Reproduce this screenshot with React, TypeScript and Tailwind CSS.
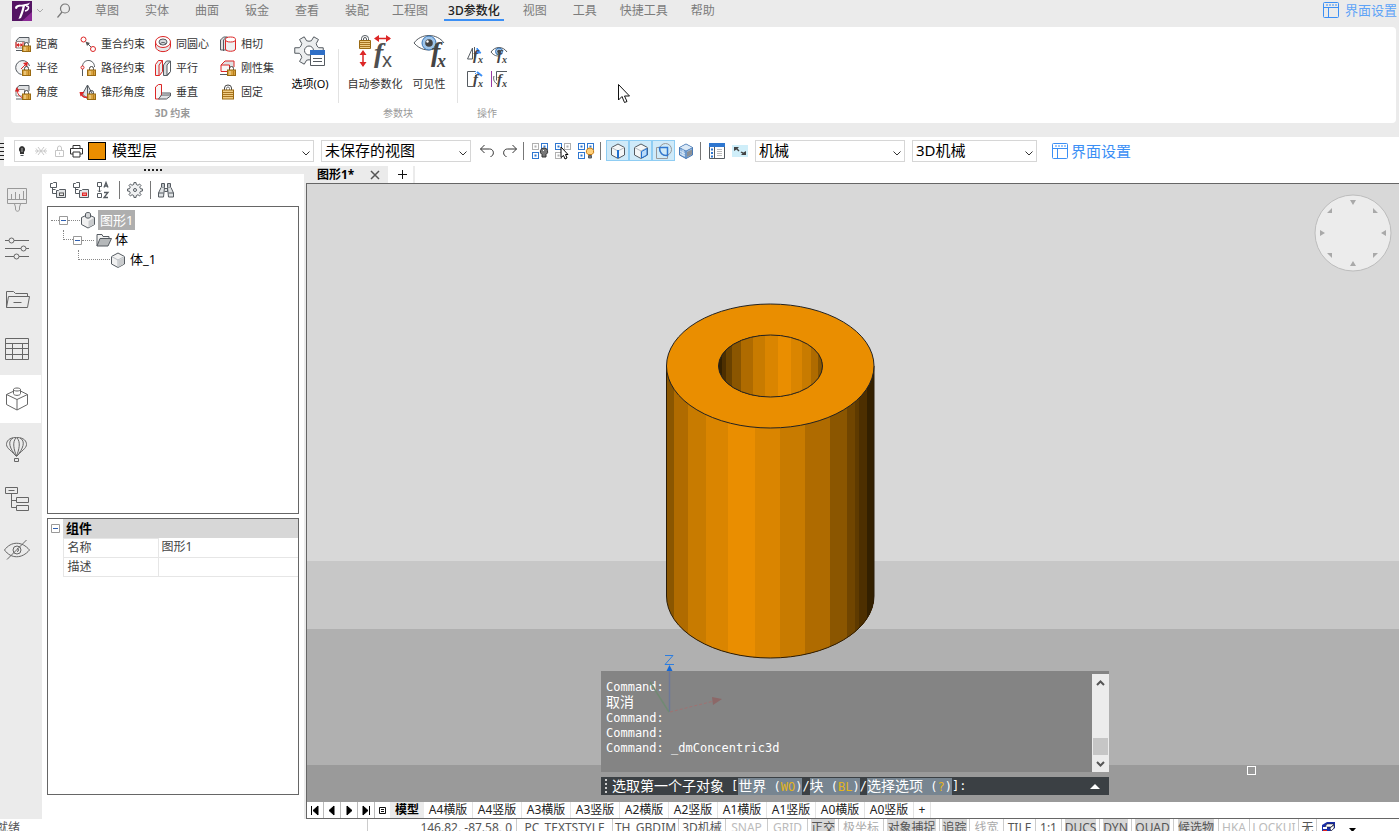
import React from "react";

type IconProps = { children: React.ReactNode; size?: string; box?: string };

function Icon({ children, size = "size-4", box = "0 0 16 16" }: IconProps) {
  return (
    <svg
      viewBox={box}
      className={`${size} shrink-0 overflow-visible`}
      fill="none"
      stroke="#555b61"
      strokeWidth="1"
      aria-hidden="true"
    >
      {children}
    </svg>
  );
}

// outline of a cog with n flat teeth between radii r and R
function gear(cx: number, cy: number, R: number, r: number, n: number) {
  const step = (Math.PI * 2) / n;
  const at = (radius: number, a: number) =>
    `${(cx + radius * Math.cos(a)).toFixed(2)} ${(cy + radius * Math.sin(a)).toFixed(2)}`;
  let d = "";
  for (let i = 0; i < n; i++) {
    const a = i * step;
    d += `${i ? "L" : "M"}${at(r, a - step * 0.27)}L${at(R, a - step * 0.18)}`;
    d += `L${at(R, a + step * 0.18)}L${at(r, a + step * 0.27)}`;
    d += `Q${at(r * 0.88, a + step * 0.5)} ${at(r, a + step * 0.73)}`;
  }
  return d + "z";
}

function Lock({ x, y }: { x: number; y: number }) {
  return (
    <g transform={`translate(${x} ${y})`}>
      <path d="M1.500 4V2.500a2 2 0 0 1 4 0V4" stroke="#444" />
      <rect x="-0.500" y="4" width="8" height="5.500" fill="#d9a441" stroke="#9a6a12" />
      <path d="M2 5v4" stroke="#f8e2ae" />
      <path d="M5.500 5v4" stroke="#b97e1c" />
    </g>
  );
}

const solid = (
  <>
    <path d="M1 5l3-3.500h10V7" fill="#dfe1e3" />
    <path d="M1 5.500h8.500V12H1z" fill="#fafafa" stroke="#888" />
  </>
);

const constraints = [
  {
    name: "距离",
    icon: (
      <>
        {solid}
        <path d="M1 6v6M8 6v6M2 9h5" stroke="#dc2626" />
        <path d="M1 9l3-2v4zM8 9L5.500 7v4z" fill="#dc2626" stroke="none" />
        <path d="M1 14.500h6" />
        <Lock x={8} y={6} />
      </>
    ),
  },
  {
    name: "重合约束",
    icon: (
      <>
        <circle cx="3.500" cy="3.500" r="2.500" stroke="#dc2626" />
        <circle cx="13" cy="13" r="2.500" stroke="#dc2626" />
        <path d="M7.500 7.500L11 11" />
        <path d="M5.500 5.500l4.500 1.500L7 10z" fill="#555" stroke="none" />
      </>
    ),
  },
  {
    name: "同圆心",
    icon: (
      <>
        <path d="M.5 6v4c0 7.500 15 7.500 15 0V6" fill="#e6e8ea" stroke="#dc2626" />
        <ellipse cx="8" cy="6" rx="7.500" ry="5.500" fill="#fff" stroke="#dc2626" />
        <ellipse cx="8" cy="6" rx="4" ry="3" fill="#d7dadd" />
        <path d="M5 8c1-2 5-2 6 0" />
      </>
    ),
  },
  {
    name: "相切",
    icon: (
      <>
        <path d="M.5 14V4l3-3h4v13z" fill="#dfe1e3" />
        <path d="M3.500 15V4l3-3" />
        <path d="M5.500 3.500V13c0 3 10 3 10 0V3.500" fill="#eef0f1" stroke="#dc2626" />
        <ellipse cx="10.500" cy="3.500" rx="5" ry="2.500" fill="#fff" stroke="#dc2626" />
      </>
    ),
  },
  {
    name: "半径",
    icon: (
      <>
        <path d="M14.500 6A7 7 0 1 0 6.500 14.500" fill="#f2f3f4" />
        <path d="M6 9l5-5" stroke="#dc2626" />
        <path d="M13 2l-1 5-4-4z" fill="#dc2626" stroke="none" />
        <Lock x={8} y={6} />
      </>
    ),
  },
  {
    name: "路径约束",
    icon: (
      <>
        <path d="M2.500 6c1-8 12-7 12 1" />
        <path d="M2.500 9v7" />
        <circle cx="2.500" cy="7.500" r="1.500" fill="#fff" stroke="#dc2626" />
        <Lock x={8} y={6} />
      </>
    ),
  },
  {
    name: "平行",
    icon: (
      <>
        <path d="M.5 4.500l3-4h4v11l-3 4h-4z" fill="#eceeef" stroke="#dc2626" />
        <path d="M4 15.500V5l3.500-4.500" stroke="#dc2626" />
        <path d="M8.500 15.500V5l3-4h4v10.500l-3 4z" fill="#d9dcde" />
        <path d="M12 15V5l3.500-4v10.500z" fill="#fff" />
      </>
    ),
  },
  {
    name: "刚性集",
    icon: (
      <>
        <path d="M1 5l4-4h9v6" fill="#dfe1e3" stroke="#dc2626" />
        <path d="M1 5h8.500v6.500H1z" fill="#f7f7f7" stroke="#dc2626" />
        <path d="M0 14.500h7" />
        <Lock x={8} y={6} />
      </>
    ),
  },
  {
    name: "角度",
    icon: (
      <>
        {solid}
        <path d="M2 5c0 5 3 8 6 9" stroke="#dc2626" />
        <path d="M2 3L0 7.500h4.500z" fill="#dc2626" stroke="none" />
        <path d="M1 15h6" />
        <Lock x={8} y={6} />
      </>
    ),
  },
  {
    name: "锥形角度",
    icon: (
      <>
        <path d="M7.500 1l5 9-5 5-5-5z" fill="#dfe2e4" />
        <path d="M7.500 1v14" />
        <path d="M1 9c1 4 4 5 7 4" stroke="#dc2626" strokeWidth="1.500" />
        <path d="M-.5 8H4.500L.5 12.500z" fill="#dc2626" stroke="none" />
        <Lock x={8} y={6} />
      </>
    ),
  },
  {
    name: "垂直",
    icon: (
      <>
        <path d="M.5 15V3l3-2.500h3V11l-2 4z" fill="#f7f7f7" stroke="#dc2626" />
        <path d="M6.500 9h9v3l-4 3H3.500l3-4h9" fill="#dfe2e4" />
      </>
    ),
  },
  {
    name: "固定",
    icon: (
      <>
        <path d="M4.500 6V4a3.500 3 0 0 1 7 0v2" stroke="#444" />
        <path d="M6.500 6V4.500a1.500 1.500 0 0 1 3 0V6" stroke="#777" />
        <rect x="2.500" y="6" width="11" height="9" fill="#f0cd84" stroke="#9a6a12" />
        <path d="M3 8.500h10M3 10.500h10M3 12.500h10" stroke="#a87420" />
      </>
    ),
  },
];

const menus = [
  "草图",
  "实体",
  "曲面",
  "钣金",
  "查看",
  "装配",
  "工程图",
  "3D参数化",
  "视图",
  "工具",
  "快捷工具",
  "帮助",
];

function LayoutIcon() {
  return (
    <Icon>
      <g stroke="#3b8ff5">
        <rect x="0.500" y="0.500" width="15" height="15" rx="1" />
        <path d="M0.500 5.500h15M5.500 5.500v10" />
        <path d="M3 3h11" strokeDasharray="2 1" />
      </g>
    </Icon>
  );
}

function MenuBar() {
  return (
    <nav className="flex h-[27px] shrink-0 items-start pl-3 pr-0.5 text-[#7c7c7c]">
      <svg viewBox="0 0 20 20" className="mt-px size-5" aria-label="logo">
        <rect width="20" height="20" fill="#541463" />
        <path d="M10 20l10-9v9z" fill="#8b2a96" />
        <path
          d="M3 7.500C3 3 8 4 11 3.500s5-1 7-2L16.500 4c-2 1-3 .8-3.500 1-1 4-2 8-4 12l-2.500 1C8 14 10 9 10.500 5.500 7 5.500 5 6 5 8z"
          fill="#fff"
        />
        <path d="M14 5c4 0 3 4-1 5" fill="none" stroke="#fff" strokeWidth="1.500" />
      </svg>
      <svg viewBox="0 0 8 5" className="ml-1 mt-2 h-[5px] w-2" fill="none" stroke="#aaa">
        <path d="M1 1l3 3 3-3" />
      </svg>
      <button aria-label="搜索" className="ml-3 mt-[3px]">
        <svg viewBox="0 0 16 16" className="size-4" fill="none" stroke="#777" strokeWidth="1.200">
          <circle cx="9" cy="5.500" r="4.500" />
          <path d="M6 9l-4.500 5.500" />
        </svg>
      </button>
      <div className="ml-2.5 flex">
        {menus.map((m) => (
          <button
            key={m}
            className={`relative h-[21px] min-w-[50px] px-[10px] text-xs leading-[21px] ${
              m === "3D参数化" ? "font-medium text-[#222]" : ""
            }`}
          >
            {m}
            {m === "3D参数化" && (
              <span className="absolute inset-x-1.5 bottom-0 h-0.5 bg-[#3b8ff5]" />
            )}
          </button>
        ))}
      </div>
      <button className="ml-auto mt-0.5 flex items-center gap-1.5 text-[13px] leading-4 text-[#5ea3f7]">
        <LayoutIcon />
        界面设置
      </button>
    </nav>
  );
}

function Fx({ small }: { small?: boolean }) {
  return (
    <g
      fill="#444"
      stroke="none"
      fontFamily="Liberation Serif, serif"
      fontStyle="italic"
      fontWeight="bold"
    >
      <text x={small ? 6 : 18} y={small ? 13 : 26} fontSize={small ? 15 : 28}>
        f
      </text>
      <text x={small ? 11 : 24} y={small ? 16 : 32} fontSize={small ? 10 : 18}>
        x
      </text>
    </g>
  );
}

function Ribbon() {
  return (
    <section className="ml-[11px] mr-[3px] flex h-24 shrink-0 rounded bg-white text-[11px] text-[#333]">
      <div className="flex w-[327px] flex-col">
        <div className="flex flex-1 items-start">
          <div className="grid grid-cols-[65px_75px_65px_70px] pl-1 pt-[5px]">
            {constraints.map((c) => (
              <button key={c.name} className="flex h-6 items-center gap-[5px] whitespace-nowrap">
                <Icon>{c.icon}</Icon>
                {c.name}
              </button>
            ))}
          </div>
          <button className="flex w-10 flex-col items-center gap-[9px] whitespace-nowrap pt-2 text-black">
            <Icon size="size-8" box="0 0 32 32">
              <path d={gear(15, 15.5, 14.5, 10, 6)} fill="#eceeef" />
              <circle cx="15" cy="15.500" r="4.500" fill="#fff" />
              <path d="M16.500 16.500h14v14h-14z" fill="#fff" />
              <path d="M16 15h15v5H16z" fill="#2f6fc6" stroke="none" />
              <path d="M19 23.500h9M19 26.500h9" />
            </Icon>
            <span>选项(O)</span>
          </button>
        </div>
        <div className="h-[18px] pr-1 text-center text-[10px] font-bold leading-4 text-[#999]">3D 约束</div>
      </div>
      <div className="mt-[22px] h-[54px] w-px bg-[#e2e2e2]" />
      <div className="flex w-[118px] flex-col">
        <div className="flex flex-1 items-start gap-2 pl-2">
          <button className="flex w-14 flex-col items-center gap-[9px] whitespace-nowrap pt-2">
            <Icon size="size-8" box="0 0 32 32">
              <path d="M2.500 5V3.500a3.500 3 0 0 1 7 0V5M4.500 5V4a1.500 1.500 0 0 1 3 0v1" />
              <path d="M.5 5.500h11v8H.5z" fill="#f0cd84" stroke="#9a6a12" />
              <path d="M1 7.500h10M1 9.500h10M1 11.500h10" stroke="#a87420" />
              <path d="M17 3.500h14M4 17v14" stroke="#dc2626" strokeWidth="1.500" />
              <path
                d="M15 3.500l5-3.500v7zM32 3.500L27 0v7zM4 15L.5 20h7zM4 32l-3.500-5h7z"
                fill="#dc2626"
                stroke="none"
              />
              <g fill="#505050" stroke="none">
                <text x="15" y="27" fontSize="28" fontStyle="italic" fontWeight="bold" fontFamily="Liberation Serif, serif">
                  f
                </text>
                <text x="23" y="32" fontSize="20" fontFamily="Liberation Sans, sans-serif">
                  x
                </text>
              </g>
            </Icon>
            <span>自动参数化</span>
          </button>
          <button className="flex w-9 flex-col items-center gap-[9px] whitespace-nowrap pt-2">
            <Icon size="size-8" box="0 0 32 32">
              <path d="M1 8C8-2 24-2 31 8M1 8c6 7 14 8 19 6" />
              <circle cx="16" cy="8" r="7" fill="#9fc5ea" stroke="#3a76b8" />
              <circle cx="16" cy="8" r="3.800" fill="#444" stroke="none" />
              <circle cx="14.500" cy="6.500" r="1.200" fill="#fff" stroke="none" />
              <Fx />
            </Icon>
            <span>可见性</span>
          </button>
        </div>
        <div className="h-[18px] text-center text-[10px] leading-4 text-[#999]">参数块</div>
      </div>
      <div className="mt-[22px] h-[54px] w-px bg-[#e2e2e2]" />
      <div className="flex w-[58px] flex-col">
        <div className="grid flex-1 grid-cols-2 content-start gap-x-2 gap-y-2 pl-[9px] pr-[9px] pt-5">
          <button aria-label="镜像">
            <Icon>
              <path d="M5.500 1v11H.5zM7.500 0v13" />
              <path d="M10 1l4 5h-4z" fill="#3b8ff5" stroke="#3b8ff5" />
              <Fx small />
            </Icon>
          </button>
          <button aria-label="显示">
            <Icon>
              <path d="M0 5c4-6 12-6 16 0M0 5c3 4 6 4 8 4" />
              <circle cx="8" cy="4.500" r="3.500" fill="#9fc5ea" stroke="#3a76b8" />
              <circle cx="8" cy="4.500" r="1.800" fill="#444" stroke="none" />
              <Fx small />
            </Icon>
          </button>
          <button aria-label="拉伸">
            <Icon>
              <path d="M8 .5H.5v15H6" />
              <path d="M8.500 0v14" stroke="#3b8ff5" strokeDasharray="1 1" />
              <path d="M10 1l5 4" stroke="#3b8ff5" strokeWidth="2" />
              <Fx small />
            </Icon>
          </button>
          <button aria-label="翻转">
            <Icon>
              <path d="M.5 0v16" stroke="#9b3ba5" />
              <path d="M16 .5H5.500v9M3 5c-1 3 0 6 3 8" />
              <Fx small />
            </Icon>
          </button>
        </div>
        <div className="h-[18px] text-center text-[10px] leading-4 text-[#999]">操作</div>
      </div>
    </section>
  );
}

function Chevron() {
  return (
    <svg
      viewBox="0 0 8 5"
      className="pointer-events-none absolute right-[3px] top-2.5 h-[5px] w-2"
      fill="none"
      stroke="#333"
    >
      <path d="M.5 .5L4 4 7.500 .5" />
    </svg>
  );
}

function Combo({ label, value, width }: { label: string; value: string; width: string }) {
  return (
    <div className={`relative flex h-[22px] border border-[#d6d6d6] bg-white ${width}`}>
      <select
        aria-label={label}
        className="h-[18px] w-full appearance-none bg-transparent pl-[3px] text-[15px] leading-[18px] text-black outline-none"
      >
        <option>{value}</option>
      </select>
      <Chevron />
    </div>
  );
}

function Squares({ on, children }: { on: string[]; children: React.ReactNode }) {
  const spots = [
    [0.5, 0.5],
    [9.5, 0.5],
    [0.5, 9.5],
  ];
  return (
    <Icon>
      {spots.map(([x, y], i) => (
        <g key={i} stroke={on[i]}>
          <rect x={x} y={y} width="6" height="6" fill="#fff" />
          <rect x={x + 2.5} y={y + 2.5} width="1" height="1" fill={on[i]} />
        </g>
      ))}
      {children}
    </Icon>
  );
}

function Cube({ edge }: { edge?: "edge" | "face" | "blue" }) {
  const line = edge === "blue" ? "#4a7ab5" : "#555b61";
  return (
    <Icon>
      <g stroke={line} strokeLinejoin="round">
        <path d="M1.500 4.500L8 8l6.500-3.500M8 8v7.500" stroke="#b5babf" />
        <path
          d="M8 1l6.500 3.500v7.500L8 15.500 1.500 12V4.500z"
          fill={edge === "blue" ? "#8fb6e0" : edge ? "#f4f6f7" : "#f1f1f1"}
        />
        <path d="M1.500 4.500L8 8l6.500-3.500M8 8v7.500" stroke={edge === "blue" ? line : "#b5babf"} />
      </g>
      {!edge && <path d="M8.500 8.500l5.500-3v6.500l-5.500 3z" fill="#c9cbcd" stroke="none" />}
      {edge === "edge" && <path d="M8 7v8" stroke="#1f6fd0" strokeWidth="2" />}
      {edge === "face" && (
        <path d="M8.500 8.500l5.500-3v6.500l-5.500 3z" fill="#b9dbfa" stroke="#1f6fd0" />
      )}
      {edge === "blue" && (
        <>
          <path d="M8 1.500l6 3L8 7.500 2 4.500z" fill="#dbe9f6" stroke="none" />
          <path d="M9 9l5-2.500v5L9 14z" fill="#8b9096" stroke="none" />
          <path d="M2 8l5 3M2 10.500L7 13M5 6.500V13" stroke="#dbe9f6" />
        </>
      )}
    </Icon>
  );
}

function Divider() {
  return <span className="h-[18px] w-px shrink-0 bg-[#777]" />;
}

function Toolbar() {
  const blue = "#2f77d0";
  const gray = "#b0b0b0";
  return (
    <section className="mt-3.5 flex h-[29px] shrink-0 items-center">
      <div className="h-[18px] w-1 bg-[repeating-linear-gradient(#222_0_1px,transparent_1px_4px)] pr-1" />
      <div className="flex h-full flex-1 items-center bg-white pb-0.5 pl-2.5">
        <div className="relative flex h-[22px] w-[300px] items-center border border-[#d6d6d6]">
          <Icon>
            <path d="M7 3a3.500 3.500 0 0 0-2 6v2h4V9a3.500 3.500 0 0 0-2-6z" fill="#333" stroke="none" />
            <path d="M5.500 12.500h3" />
            <path d="M7 5v4" stroke="#aaa" />
          </Icon>
          <span className="w-0.5" />
          <Icon>
            <path
              d="M2 8h12M5 4l6 8M11 4l-6 8M3 5.500L5 8l-2 2.500M13 5.500L11 8l2 2.500"
              stroke="#c9c9c9"
            />
          </Icon>
          <span className="w-0.5" />
          <Icon>
            <path d="M4.500 7.500h8v6h-8zM6.500 7V5a2 2 0 0 1 4 0v2M8.500 9.500v2" stroke="#c5c5c5" />
          </Icon>
          <span className="w-0.5" />
          <Icon>
            <path d="M4 5.500V2.500h7v3M4 11H1.500V5.500h12V11H11M4 9h7v5H4z" stroke="#333" />
          </Icon>
          <span className="ml-[3px] size-[18px] shrink-0 border border-black bg-[#ea8e00]" />
          <select
            aria-label="图层"
            className="mb-0.5 h-[18px] flex-1 appearance-none bg-transparent pl-1.5 text-[15px] leading-[18px] text-black outline-none"
          >
            <option>模型层</option>
          </select>
          <Chevron />
        </div>
        <span className="w-[7px]" />
        <Combo label="视图" value="未保存的视图" width="w-[150px]" />
        <div className="flex items-center gap-[7px] pl-2 pr-[5px]">
          <button aria-label="撤销">
            <Icon>
              <path d="M5.500 2L1.500 6l4 4M1.500 6h9c5 0 5 7 1 7.500" stroke="#333" />
            </Icon>
          </button>
          <button aria-label="重做">
            <Icon>
              <path d="M10.500 2l4 4-4 4M14.500 6h-9c-5 0-5 7-1 7.500" stroke="#333" />
            </Icon>
          </button>
        </div>
        <Divider />
        <div className="flex items-center gap-[7px] pl-2 pr-1.5">
          <button aria-label="隐藏对象">
            <Squares on={[gray, blue, blue]}>
              <path d="M12 5a3.500 3.500 0 0 0-2 6.500V14h4v-2.500A3.500 3.500 0 0 0 12 5z" fill="#777" stroke="#333" />
              <path d="M11 8l1-1" stroke="#fff" />
            </Squares>
          </button>
          <button aria-label="隔离对象">
            <Squares on={[blue, gray, gray]}>
              <path d="M6 4v10.500l2.500-2 1.500 3.500 2-1-1.500-3.500H13z" fill="#fff" stroke="#000" />
            </Squares>
          </button>
          <button aria-label="显示对象">
            <Squares on={[blue, blue, blue]}>
              <path d="M12 5a3.500 3.500 0 0 0-2 6.500h4A3.500 3.500 0 0 0 12 5z" fill="#ffd07a" stroke="#c87a10" />
              <path d="M10.500 12.500V15h3v-2.500z" fill="#777" />
            </Squares>
          </button>
        </div>
        <Divider />
        <div className="flex items-center pl-[5px] pr-1.5">
          <button aria-label="边" className="flex h-[21px] w-[23px] items-center justify-center border border-[#8fcdf3] bg-[#cfeaf9]">
            <Cube edge="edge" />
          </button>
          <button aria-label="面" className="flex h-[21px] w-[23px] items-center justify-center border border-[#8fcdf3] bg-[#cfeaf9]">
            <Cube edge="face" />
          </button>
          <button aria-label="边界" className="flex h-[21px] w-[23px] items-center justify-center border border-[#8fcdf3] bg-[#cfeaf9]">
            <Icon>
              <path d="M.5 4.500h11v11H.5z" stroke="#999" />
              <circle cx="9.500" cy="6.500" r="6" stroke="#999" />
              <path d="M3.500 4.500h8v8C6.500 13 3.500 10 3.500 4.500z" stroke={blue} strokeWidth="1.500" />
            </Icon>
          </button>
          <button aria-label="实体" className="ml-[3px]">
            <Cube edge="blue" />
          </button>
        </div>
        <Divider />
        <div className="flex items-center gap-[7px] pl-2 pr-[7px]">
          <button aria-label="属性面板">
            <Icon>
              <path d="M.5 .5h15v15H.5z" fill="#fff" />
              <path d="M0 0h16v4H0z" fill={blue} stroke="none" />
              <path d="M5.500 4v11" />
              <path d="M3 5.500v9" stroke={blue} strokeWidth="2" strokeDasharray="2 1.500" />
              <path d="M8 6.500h5M8 8.500h5M8 10.500h5M8 12.500h5" stroke="#bbb" />
            </Icon>
          </button>
          <button aria-label="全屏">
            <Icon>
              <path d="M0 2h16v12H0z" fill="#cfeef9" stroke="none" />
              <path d="M2 4h5L5.500 5.500l2 2-1 1-2-2L2 8zM14 12H9l1.500-1.500-2-1 1-1 2 1L14 8z" fill="#444" stroke="none" />
            </Icon>
          </button>
        </div>
        <Combo label="工作空间" value="机械" width="w-[150px]" />
        <span className="w-[7px]" />
        <Combo label="界面" value="3D机械" width="w-[125px]" />
        <button className="ml-[15px] flex items-center gap-[3px] text-[15px] leading-5 text-[#3b8ff5]">
          <LayoutIcon />
          界面设置
        </button>
      </div>
    </section>
  );
}

const sideIcons = [
  {
    name: "样式",
    d: "M3.500 2.500h19v15h-19zM3.500 13.500h19M7.500 13V8M11.500 13V6M15.500 13V8M19.500 13V5M10.500 18l1 3v2c0 3 4 3 4 0v-2l1-3",
    pale: true,
  },
  {
    name: "参数",
    d: "M1 4.500h4M10 4.500h15M7.500 2a2.500 2.500 0 1 1 0 5 2.500 2.500 0 0 1 0-5zM1 12.500h16M22 12.500h3M19.500 10a2.500 2.500 0 1 1 0 5 2.500 2.500 0 0 1 0-5zM1 20.500h9M15 20.500h10M12.500 18a2.500 2.500 0 1 1 0 5 2.500 2.500 0 0 1 0-5z",
  },
  { name: "文件", d: "M2.500 21.500V5.500h7l2 2h12v3M2.500 21.500L4.500 10.500h21l-2 11zM9.500 16.500h8" },
  { name: "表格", d: "M1.500 2.500h23v21h-23zM1.500 7.500h23M1.500 12.500h23M1.500 18.500h23M8.500 7v16M18.500 7v16" },
  {
    name: "组件",
    d: "M10 5L2.500 8.500v10L13 24l10.500-5.500v-10L16.500 5M2.500 8.500L13 13.500l10.500-5M13 13.500V24M9.500 3.500v4c0 2.500 7 2.500 7 0v-4M9.500 3.500c0-2 7-2 7 0s-7 2-7 0",
  },
  {
    name: "渲染",
    d: "M12.500 1.500c8 0 10 4 10 7 0 4-6 7-10 12-4-5-10-8-10-12 0-3 2-7 10-7zM9 2c-6 3-3 11 3 18M16 2c6 3 3 11-3 18M12 2c-4 4-2 12 .5 18M13 2c4 4 2 12-.5 18M10.500 22.500h4v3h-4z",
  },
  {
    name: "结构",
    d: "M1.500 1.500h12v6h-12zM4.500 4.500h6M12.500 11.500h12v5h-12zM12.500 19.500h12v5h-12zM7.500 8v13.500h5M7.500 14.500h5",
  },
  {
    name: "隐藏",
    d: "M.5 14C7 5 18 5 25.500 14 18 23 7 23 .5 14zM13 10a4 4 0 1 1 0 8 4 4 0 0 1 0-8zM13 12.500a1.500 1.500 0 1 1 0 3M3 23.500L22.500 4",
  },
];

function Sidebar() {
  return (
    <aside className="flex w-[42px] shrink-0 flex-col">
      {sideIcons.map((s) => (
        <button
          key={s.name}
          aria-label={s.name}
          className={`flex h-[50px] items-center border-y border-r border-[#ebebeb] pl-1 ${
            s.name === "组件" ? "bg-white" : ""
          }`}
        >
          <svg viewBox="0 0 26 26" className="size-[26px]" fill="none" stroke={s.pale ? "#999" : "#666"}>
            <path d={s.d} />
          </svg>
        </button>
      ))}
    </aside>
  );
}

function Minus() {
  return (
    <svg viewBox="0 0 9 9" className="size-[9px] shrink-0" fill="#fff" stroke="#999">
      <path d="M.5 .5h8v8h-8z" />
      <path d="M2 4.500h5" stroke="#2f5fb0" />
    </svg>
  );
}

function Dots({ width }: { width: string }) {
  return <span className={`border-t border-dotted border-[#888] ${width}`} />;
}

function TreeIcon({ badge }: { badge?: boolean }) {
  return (
    <Icon>
      <path d="M.5 5.500v-4h2l1-1h3v5zM2.500 6v5.500h4M2.500 7.500h3" />
      <path d="M6.500 15.500v-7h2l1-1h6v8z" fill="#e4e6e8" />
      <rect x="9.500" y="11" width="4" height="2.500" fill={badge ? "#f58a8a" : "#eee"} stroke={badge ? "#dc2626" : "#555"} />
    </Icon>
  );
}

function Panel() {
  return (
    <section className="flex w-[262px] shrink-0 flex-col bg-white px-[5px] pb-6">
      <div className="flex h-8 shrink-0 items-center gap-[7px] pl-[3px]">
        <button aria-label="展开">
          <TreeIcon />
        </button>
        <button aria-label="折叠">
          <TreeIcon badge />
        </button>
        <button aria-label="排序">
          <Icon>
            <path d="M1.500 .5h4v4h-4zM1.500 11.500h4v4h-4zM3.500 5v5M2 8.500L3.500 10 5 8.500" />
            <path d="M8 5.500L10 .5l2 5M9 4h2M8 10.500h4l-4 5h4" strokeWidth="1.300" />
          </Icon>
        </button>
        <Divider />
        <button aria-label="设置">
          <Icon>
            <path d={gear(8, 8, 7.5, 5.8, 8)} fill="#f0f1f2" />
            <circle cx="8" cy="8" r="1.500" />
          </Icon>
        </button>
        <Divider />
        <button aria-label="查找">
          <Icon>
            <path d="M3.500 1.500h3v4h-3zM9.500 1.500h3v4h-3z" fill="#bcc1c5" />
            <path d="M3 5.500L.5 11v4h5l1-9.500M13 5.500l2.500 5.500v4h-5l-1-9.500M6.500 6.500h3v3h-3M.5 11h5M10.500 11h5" fill="#dfe2e4" />
          </Icon>
        </button>
      </div>
      <div className="min-h-0 flex-1 border border-[#666] pt-[3px] text-[13px] text-black">
        <div className="flex h-5 items-center pl-[3px]">
          <Dots width="w-2" />
          <Minus />
          <Dots width="w-3" />
          <Icon>
            <path d="M8 2.500l6.500 3v7L8 16l-6.500-3.500v-7z" fill="#f1f1f1" />
            <path d="M8.500 9L14 6v6.500l-5.500 3z" fill="#c9cbcd" stroke="none" />
            <path d="M5.500 5V2c0-2 5-2 5 0v3c0 1.500-5 1.500-5 0" fill="#d5d7d9" />
          </Icon>
          <span className="ml-0.5 bg-[#aeaeae] px-0.5 leading-5 text-white">图形1</span>
        </div>
        <div className="ml-[15px] flex h-5 items-stretch">
          <span className="h-2.5 w-2.5 border-b border-l border-dotted border-[#888]" />
          <span className="flex items-center">
            <Minus />
            <Dots width="w-3" />
            <span className="ml-0.5">
              <Icon>
                <path d="M1 14V2.500h5l1 2h6V7" fill="#f2f2f2" />
                <path d="M1 14L4 6.500h11.500L12 14z" fill="#b5b8ba" />
              </Icon>
            </span>
            <span className="ml-[3px]">体</span>
          </span>
        </div>
        <div className="ml-[30px] flex h-5 items-stretch">
          <span className="h-2.5 w-8 border-b border-l border-dotted border-[#888]" />
          <span className="flex items-center">
            <Cube />
            <span className="ml-1">体_1</span>
          </span>
        </div>
      </div>
      <div className="mt-1 h-[277px] shrink-0 border border-[#666] text-xs text-[#444]">
        <table className="w-full table-fixed border-collapse leading-[18px]">
          <colgroup>
            <col className="w-[15px]" />
            <col className="w-[95px]" />
            <col />
          </colgroup>
          <thead>
            <tr className="h-[19px]">
              <th className="pl-[3px]">
                <Minus />
              </th>
              <th colSpan={2} className="bg-[#d7d7d7] pl-[3px] text-left text-[13px] font-bold text-black">
                组件
              </th>
            </tr>
          </thead>
          <tbody>
            <tr className="h-[19px]">
              <td />
              <td className="border border-[#e6e6e6] pl-1">名称</td>
              <td className="border-b border-[#e6e6e6] pl-[3px]">图形1</td>
            </tr>
            <tr className="h-[19px]">
              <td />
              <td className="border border-[#e6e6e6] pl-1">描述</td>
              <td className="border-b border-[#e6e6e6]" />
            </tr>
          </tbody>
        </table>
      </div>
    </section>
  );
}

// [left edge, fill] of every visible facet
const outer: [number, string][] = [
  [16, "#8a5600"],
  [24, "#b06b00"],
  [38, "#c87b00"],
  [56, "#da8500"],
  [78, "#ea8e00"],
  [105, "#da8500"],
  [130, "#c87b00"],
  [155, "#af6b00"],
  [180, "#8b5600"],
  [197, "#704500"],
  [205, "#5e3a00"],
  [209, "#4d2f00"],
  [217, "#332000"],
];
const inner: [number, string][] = [
  [68, "#332000"],
  [72, "#4d2f00"],
  [76, "#6a4200"],
  [82, "#8b5600"],
  [91, "#af6b00"],
  [103, "#c87b00"],
  [115, "#da8500"],
  [128, "#ea8e00"],
  [141, "#da8500"],
  [152, "#c87b00"],
  [161, "#af6b00"],
  [168, "#8a5600"],
];

function Model() {
  return (
    <svg
      viewBox="0 0 240 385"
      className="absolute left-[343px] top-[106px] h-[385px] w-[240px]"
      aria-label="体_1"
    >
      <defs>
        <clipPath id="body">
          <path d="M16.500 76v230a103.750 62 0 0 0 207.500 0V76z" />
        </clipPath>
        <clipPath id="hole">
          <ellipse cx="120.500" cy="76" rx="52" ry="31" />
        </clipPath>
      </defs>
      <g clipPath="url(#body)" shapeRendering="crispEdges">
        {outer.map(([x, fill]) => (
          <rect key={x} x={x} y="70" width={240 - x} height="310" fill={fill} />
        ))}
      </g>
      <path d="M16.500 76v230a103.750 62 0 0 0 207.500 0V76" fill="none" stroke="#2a1c08" />
      <ellipse cx="120.250" cy="76" rx="103.750" ry="62" fill="#ea8e00" stroke="#222" />
      <g clipPath="url(#hole)" shapeRendering="crispEdges">
        {inner.map(([x, fill]) => (
          <rect key={x} x={x} y="40" width={180 - x} height="72" fill={fill} />
        ))}
      </g>
      <ellipse cx="120.500" cy="76" rx="52" ry="31" fill="none" stroke="#222" />
    </svg>
  );
}

function Compass() {
  return (
    <svg viewBox="0 0 78 78" className="absolute right-[7px] top-2.5 size-[78px]" aria-label="方向">
      <circle cx="39" cy="39" r="38" fill="#ececec" stroke="#bdbdbd" />
      <g fill="#a9a9a9">
        <path d="M36 6h6l-3 5zM36 72h6l-3-5zM6 36v6l5-3zM72 36v6l-5-3z" />
        <path d="M13 19l5-5v5zM64 19l-5-5v5zM13 59h5v5zM64 59h-5v5z" />
      </g>
    </svg>
  );
}

function CommandLine() {
  return (
    <div className="absolute bottom-[7px] left-[294px] w-[508px] font-['DejaVu_Sans_Mono','Noto_Sans_CJK_SC',monospace] text-white">
      <div className="flex h-[101px] bg-[#848484] pt-[3px]">
        <pre className="flex-1 pl-[5px] pt-1.5 font-[inherit] text-xs leading-[15px]">
          Command:{"\n"}
          <span className="text-sm leading-[15px]">取消</span>
          {"\n"}Command:{"\n"}Command:{"\n"}Command: _dmConcentric3d
        </pre>
        <div className="flex w-[17px] flex-col items-center bg-[#ececec]">
          <svg viewBox="0 0 17 17" className="size-[17px]" fill="none" stroke="#555" strokeWidth="2">
            <path d="M5 11l3.500-3.500L12 11" />
          </svg>
          <span className="mt-auto h-[17px] w-[15px] bg-[#c6c6c6]" />
          <svg viewBox="0 0 17 17" className="size-[17px]" fill="none" stroke="#555" strokeWidth="2">
            <path d="M5 7l3.500 3.500L12 7" />
          </svg>
        </div>
      </div>
      <svg
        viewBox="0 0 80 62"
        className="absolute -top-4 left-[44px] h-[62px] w-20"
        fill="none"
        aria-label="坐标系"
      >
        <path d="M20 .5h8L20 9.500h9" stroke="#2b7de0" />
        <path d="M24.500 10l3 6h-6z" fill="#1268d8" />
        <path d="M24.500 16v41" stroke="#6d7899" strokeWidth="1.500" />
        <path d="M24 57L5 27" stroke="#718a74" strokeWidth="1.500" />
        <path d="M25 57l44-11" stroke="#a07272" strokeDasharray="3 2" />
        <path d="M67 42l10 2-9 6z" fill="#8c6868" />
      </svg>
      <div className="mt-[5px] flex h-[18px] items-center bg-[#3b4044] pl-1 text-xs leading-4">
        <span className="mr-[5px] h-3.5 border-l-2 border-dotted border-[#ccc]" />
        <span className="whitespace-pre text-sm leading-4">选取第一个子对象</span>
        <span className="ml-[7px]">[</span>
        <button className="bg-[#778591]">
          <span className="text-sm leading-4">世界</span> (<span className="text-[#e3b41c]">WO</span>)
        </button>
        <span>/</span>
        <button className="bg-[#778591]">
          <span className="text-sm leading-4">块</span> (<span className="text-[#e3b41c]">BL</span>)
        </button>
        <span>/</span>
        <button className="bg-[#778591]">
          <span className="text-sm leading-4">选择选项</span> (<span className="text-[#e3b41c]">?</span>)
        </button>
        <span>]:</span>
        <svg viewBox="0 0 10 5" className="ml-auto mr-[9px] h-[5px] w-2.5" fill="#fff">
          <path d="M0 5l5-5 5 5z" />
        </svg>
      </div>
    </div>
  );
}

const sheets = ["A4横版", "A4竖版", "A3横版", "A3竖版", "A2横版", "A2竖版", "A1横版", "A1竖版", "A0横版", "A0竖版"];
const arrows = [
  { name: "第一个", d: "M2.500 1v9M9 1v9L4 5.500z" },
  { name: "上一个", d: "M8 1v9L3 5.500z" },
  { name: "下一个", d: "M4 1v9l5-4.500z" },
  { name: "最后一个", d: "M9.500 1v9M3 1v9l5-4.500z" },
];

function Workspace() {
  return (
    <section className="flex min-w-0 flex-1 flex-col bg-white">
      <div className="flex h-[17px] shrink-0 items-stretch text-xs text-black">
        <div className="flex w-[82px] items-center bg-[#ebebeb] pl-[11px]">
          <span className="flex-1 whitespace-nowrap font-bold leading-4">图形1*</span>
          <button aria-label="关闭" className="mr-2">
            <svg viewBox="0 0 10 10" className="size-2.5" stroke="#555" strokeWidth="1.500">
              <path d="M1 1l8 8M9 1L1 9" />
            </svg>
          </button>
        </div>
        <button aria-label="新建" className="flex w-[27px] items-center justify-center border-r-2 border-[#ebebeb] pl-1">
          <svg viewBox="0 0 9 9" className="size-[9px]" stroke="#111">
            <path d="M4.500 0v9M0 4.500h9" />
          </svg>
        </button>
      </div>
      <div className="relative min-h-0 flex-1 overflow-hidden border-l border-t border-[#666] bg-[linear-gradient(#d8d8d8_61%,#c7c7c7_61%_72%,#b0b0b0_72%_94%,#9a9a9a_94%)]">
        <Model />
        <Compass />
        <CommandLine />
        <span className="absolute bottom-[27px] right-[143px] size-[9px] border border-white" />
      </div>
      <div className="flex h-[17px] shrink-0 border-b border-l border-[#666] text-xs leading-4 text-[#222]">
        {arrows.map((a) => (
          <button key={a.name} aria-label={a.name} className="w-[17px] border-r border-[#bbb] pl-0.5">
            <svg viewBox="0 0 12 11" className="h-[11px] w-3" fill="#000" stroke="#000">
              <path d={a.d} />
            </svg>
          </button>
        ))}
        <button aria-label="列表" className="px-1">
          <svg viewBox="0 0 7 7" className="size-[7px]" fill="none" stroke="#111">
            <path d="M.5 .5h6v6h-6zM2 2.500h3M2 4.500h3" />
          </svg>
        </button>
        <button className="w-[34px] bg-[#ebebeb] font-bold text-black">模型</button>
        {sheets.map((s) => (
          <button key={s} className="w-[49px] whitespace-nowrap border-r border-[#e3e3e3]">
            {s}
          </button>
        ))}
        <button className="w-[17px] border-r border-[#e3e3e3]">+</button>
      </div>
    </section>
  );
}

const status = [
  { name: "PC_TEXTSTYLE", width: "w-24" },
  { name: "TH_GBDIM", width: "w-[66px]" },
  { name: "3D机械", width: "w-[47px]" },
  { name: "SNAP", width: "w-[42px]", look: "text-[#bbb]" },
  { name: "GRID", width: "w-10", look: "text-[#bbb]" },
  { name: "正交", width: "w-[31px]", look: "bg-[#d7d7d7]" },
  { name: "极坐标", width: "w-[45px]", look: "text-[#aaa]" },
  { name: "对象捕捉", width: "w-14", look: "bg-[#d7d7d7]" },
  { name: "追踪", width: "w-[30px]", look: "bg-[#d7d7d7]" },
  { name: "线宽", width: "w-[34px]", look: "text-[#aaa]" },
  { name: "TILE", width: "w-8" },
  { name: "1:1", width: "w-[26px]" },
  { name: "DUCS", width: "w-[38px]", look: "bg-[#d7d7d7]" },
  { name: "DYN", width: "w-8", look: "bg-[#d7d7d7]" },
  { name: "QUAD", width: "w-[42px]", look: "bg-[#d7d7d7]" },
  { name: "候选物", width: "w-[45px]", look: "bg-[#d7d7d7]" },
  { name: "HKA", width: "w-[31px]", look: "text-[#bbb]" },
  { name: "LOCKUI", width: "w-[49px]", look: "text-[#bbb]" },
  { name: "无", width: "w-[18px]" },
];

function StatusBar() {
  return (
    <footer className="flex h-3 shrink-0 items-start overflow-hidden bg-white text-xs leading-[18px] text-[#555]">
      <span className="-ml-1 w-[372px] border-r border-[#ccc]">就绪</span>
      <span className="w-[149px] border-r border-[#ccc] pr-1 text-right">146.82, -87.58, 0</span>
      {status.map((s) => (
        <button key={s.name} className={`flex h-[18px] justify-center border-r border-[#ccc] px-0.5 ${s.width}`}>
          <span className={`whitespace-nowrap ${s.look ?? ""}`}>{s.name}</span>
        </button>
      ))}
      <svg viewBox="0 0 16 12" className="ml-1 mt-0.5 h-3 w-4">
        <path d="M1 4l5-3h8v6l-5 4H1z" fill="#1b2fa8" />
        <path d="M6 3h7l-3 3H4zM9 7l4-3v3l-3 3z" fill="#fff" stroke="#111" strokeWidth=".5" />
        <path d="M2 6h4v2H2z" fill="#fff" />
        <path d="M2 9h4v3H2z" fill="#d22" />
      </svg>
      <svg viewBox="0 0 7 4" className="ml-3 mt-[9px] h-1 w-[7px]" fill="#000">
        <path d="M0 0h7L3.500 4z" />
      </svg>
    </footer>
  );
}

function App() {
  return (
    <main className="relative flex h-screen flex-col overflow-hidden bg-[#ebebeb] font-['Noto_Sans','Noto_Sans_CJK_SC',sans-serif]">
      <MenuBar />
      <Ribbon />
      <Toolbar />
      <div className="flex min-h-0 flex-1">
        <div className="flex shrink-0 flex-col">
          <div className="flex h-2 justify-center pt-[3px]">
            <span className="h-0.5 w-[18px] bg-[repeating-linear-gradient(90deg,#222_0_2px,transparent_2px_4px)]" />
          </div>
          <div className="flex min-h-0 flex-1 pr-0.5">
            <Sidebar />
            <Panel />
          </div>
        </div>
        <Workspace />
      </div>
      <StatusBar />
      <svg viewBox="0 0 12 19" className="absolute left-[618px] top-[84px] h-[19px] w-3" fill="#fff" stroke="#111">
        <path d="M.5 .5v15.500l3.500-3.500 2.500 6 2.500-1-2.500-5.500h5z" />
      </svg>
    </main>
  );
}

export default App;
